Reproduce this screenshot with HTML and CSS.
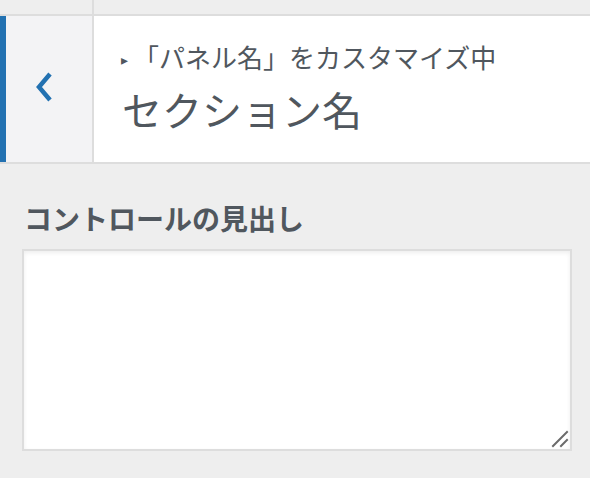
FILE: index.html
```html
<!DOCTYPE html>
<html lang="ja">
<head>
<meta charset="utf-8">
<link rel="stylesheet" href="styles.css">
</head>
<body>
<div class="topstrip">
  <div class="topstrip-left"></div>
  <div class="topstrip-right"></div>
</div>
<div class="section-header">
  <button class="back" aria-label="戻る">
    <svg width="20" height="30" viewBox="0 0 20 30"><path d="M16 2 L5 15 L16 28" fill="none" stroke="#2271b1" stroke-width="4.5" stroke-linejoin="miter"/></svg>
  </button>
  <div class="title-wrap">
    <div class="action"><span class="tri">▸</span>「パネル名」をカスタマイズ中</div>
    <h3 class="title">セクション名</h3>
  </div>
</div>
<div class="control">
  <label class="control-title">コントロールの見出し</label>
  <div class="textarea-wrap">
    <textarea class="textarea"></textarea>
    <svg class="grip" width="18" height="18" viewBox="0 0 18 18"><path d="M2 16 L16 2 M10 16 L16 10" stroke="#6b6b6b" stroke-width="2" stroke-linecap="square"/></svg>
  </div>
</div>
</body>
</html>
```
FILE: styles.css
```css
html, body {
  margin: 0;
  padding: 0;
  background: #eeeeee;
  font-family: "Noto Sans CJK JP", "Noto Sans", sans-serif;
  color: #50575e;
}
.topstrip {
  display: flex;
  height: 14px;
  border-bottom: 2px solid #dddddd;
}
.topstrip-left {
  width: 92px;
  border-right: 2px solid #dddddd;
}
.topstrip-right {
  flex: 1;
}
.section-header {
  display: flex;
  height: 146px;
  background: #ffffff;
  border-bottom: 2px solid #dddddd;
}
.back {
  width: 94px;
  flex: none;
  border: 0;
  border-left: 6px solid #2271b1;
  border-right: 2px solid #dddddd;
  background: #f3f3f5;
  margin: 0;
  padding: 0 10px 4px 0;
  display: flex;
  align-items: center;
  justify-content: center;
}
.title-wrap {
  padding: 23px 0 0 27px;
}
.action {
  font-size: 26px;
  line-height: 36px;
  color: #50575e;
  white-space: nowrap;
}
.tri {
  font-size: 14px;
  display: inline-block;
  width: 12px;
  vertical-align: 3px;
}
.title {
  margin: 6px 0 0 1px;
  font-size: 40px;
  font-weight: 400;
  line-height: 52px;
  color: #50575e;
}
.control {
  display: flex;
  flex-direction: column;
  padding: 34px 18px 0 22px;
}
.control-title {
  font-size: 28px;
  font-weight: 700;
  line-height: 40px;
  padding-left: 2px;
  margin-bottom: 11px;
  color: #50575e;
}
.textarea-wrap {
  position: relative;
  width: 550px;
  height: 202px;
}
.textarea {
  display: block;
  box-sizing: border-box;
  width: 550px;
  height: 202px;
  border: 2px solid #dddddd;
  background: #ffffff;
  box-shadow: inset 0 2px 4px rgba(0,0,0,0.07);
  margin: 0;
  padding: 4px;
  resize: none;
  font-family: inherit;
}
.grip {
  position: absolute;
  right: 3px;
  bottom: 3px;
}
```
